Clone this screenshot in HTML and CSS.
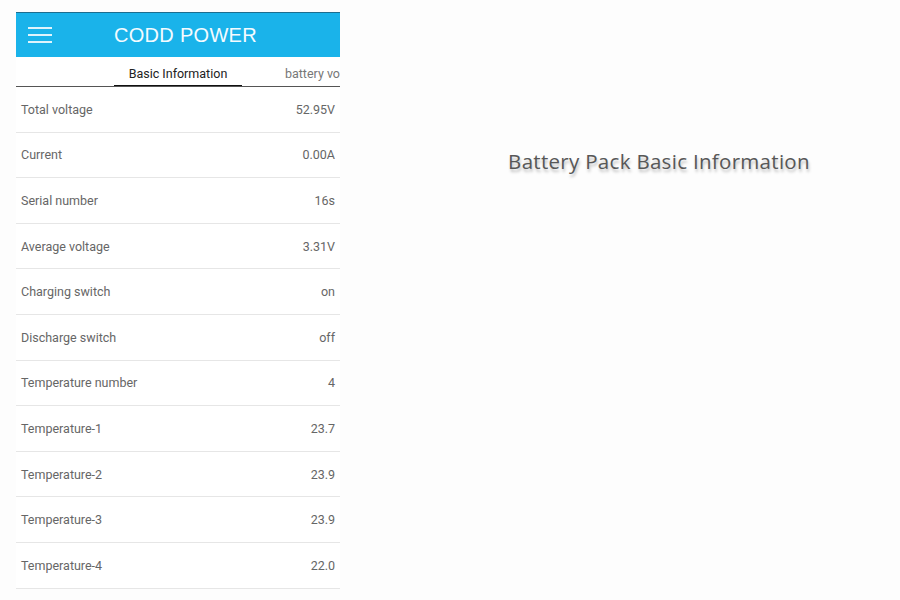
FILE: index.html
```html
<!DOCTYPE html>
<html>
<head>
<meta charset="utf-8">
<link rel="stylesheet" href="styles.css">
</head>
<body>
<div class="page">
  <div class="phone">
    <div class="header">
      <div class="menu"><span></span><span></span><span></span></div>
      <div class="brand">CODD POWER</div>
    </div>
    <div class="tabs">
      <div class="tab active">Basic Information</div>
      <div class="tab">battery vo</div>
    </div>
    <div class="list">
      <div class="row"><span>Total voltage</span><span>52.95V</span></div>
      <div class="row"><span>Current</span><span>0.00A</span></div>
      <div class="row"><span>Serial number</span><span>16s</span></div>
      <div class="row"><span>Average voltage</span><span>3.31V</span></div>
      <div class="row"><span>Charging switch</span><span>on</span></div>
      <div class="row"><span>Discharge switch</span><span>off</span></div>
      <div class="row"><span>Temperature number</span><span>4</span></div>
      <div class="row"><span>Temperature-1</span><span>23.7</span></div>
      <div class="row"><span>Temperature-2</span><span>23.9</span></div>
      <div class="row"><span>Temperature-3</span><span>23.9</span></div>
      <div class="row"><span>Temperature-4</span><span>22.0</span></div>
    </div>
  </div>
  <div class="caption">
    <h1 class="title">Battery Pack Basic Information</h1>
  </div>
</div>
</body>
</html>
```
FILE: styles.css
```css
* { box-sizing: border-box; }
html, body { margin: 0; padding: 0; }
body {
  width: 900px;
  height: 600px;
  overflow: hidden;
  background: #fdfdfd;
  font-family: Roboto, "Liberation Sans", sans-serif;
}
.page {
  display: flex;
  padding: 12px 0 0 16px;
}
.phone {
  width: 324px;
  background: #ffffff;
  flex: none;
}
.header {
  height: 45px;
  background: #1ab3ea;
  border-top: 1px solid #1d6d8e;
  display: flex;
  align-items: center;
}
.menu {
  width: 24px;
  margin-left: 12px;
  display: flex;
  flex-direction: column;
  gap: 5px;
}
.menu span {
  display: block;
  height: 2px;
  background: #dff4fc;
}
.brand {
  margin-left: 62px;
  color: #f4fbff;
  font-family: "Liberation Sans", Arial, sans-serif;
  font-size: 20px;
  letter-spacing: 0.3px;
  padding-top: 0;
}
.tabs {
  height: 30px;
  display: flex;
  border-bottom: 1px solid #555;
  overflow: hidden;
  white-space: nowrap;
  padding-left: 98px;
}
.tab {
  font-size: 12.5px;
  color: #777;
  display: flex;
  align-items: center;
  justify-content: center;
  padding-top: 4px;
}
.tab.active {
  width: 128px;
  color: #222;
  border-bottom: 2px solid #111;
  margin-bottom: -1px;
}
.tab + .tab {
  margin-left: 43px;
  padding-top: 3px;
}
.list {
  display: flex;
  flex-direction: column;
}
.row {
  height: 45.6px;
  display: flex;
  justify-content: space-between;
  align-items: center;
  padding: 0 5px 0 5px;
  border-bottom: 1px solid #e6e6e6;
  font-size: 12.5px;
  color: #666;
}
.caption {
  flex: 1;
  display: flex;
  justify-content: center;
  padding-top: 135px;
  padding-left: 78px;
}
.title {
  margin: 0;
  font-family: "Open Sans", "Liberation Sans", sans-serif;
  font-weight: 400;
  font-size: 20.5px;
  color: #575757;
  letter-spacing: 0.3px;
  text-shadow: 1px 3px 3px rgba(0,0,0,0.25);
  height: 28px;
}
```
